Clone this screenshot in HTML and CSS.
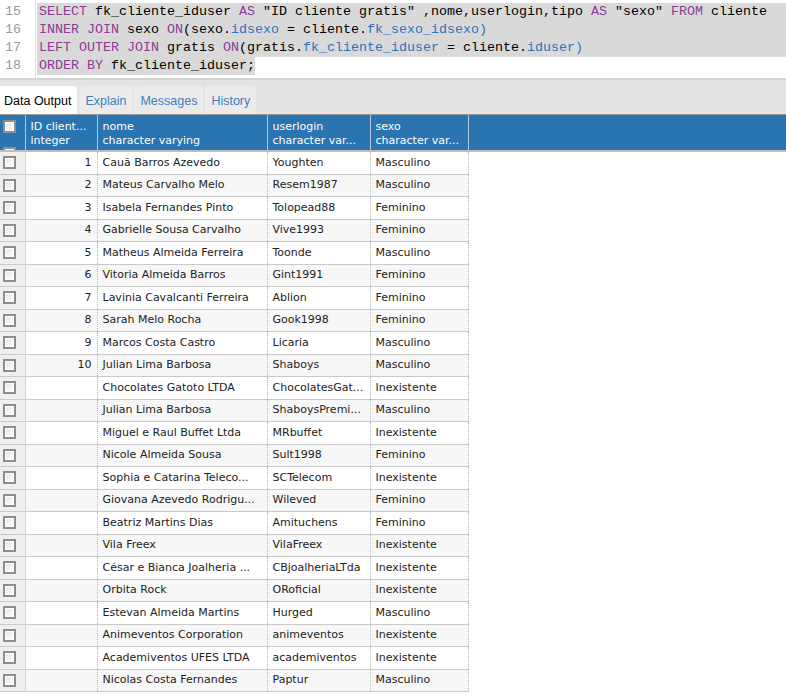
FILE: index.html
```html
<!DOCTYPE html>
<html>
<head>
<meta charset="utf-8">
<link rel="stylesheet" href="styles.css">
</head>
<body>
<div class="editor">
  <div class="gutter">
    <div class="ln">15</div>
    <div class="ln">16</div>
    <div class="ln">17</div>
    <div class="ln">18</div>
  </div>
  <div class="code">
    <div class="line full"><span class="kw">SELECT</span> fk_cliente_iduser <span class="kw">AS</span> "ID cliente gratis" ,nome,userlogin,tipo <span class="kw">AS</span> "sexo" <span class="kw">FROM</span> cliente</div>
    <div class="line full"><span class="kw">INNER JOIN</span> sexo <span class="kw">ON</span>(sexo.<span class="pr">idsexo</span> = cliente.<span class="pr">fk_sexo_idsexo</span><span class="pr">)</span></div>
    <div class="line full"><span class="kw">LEFT OUTER JOIN</span> gratis <span class="kw">ON</span>(gratis.<span class="pr">fk_cliente_iduser</span> = cliente.<span class="pr">iduser</span><span class="pr">)</span></div>
    <div class="line"><span class="sel"><span class="kw">ORDER BY</span> fk_cliente_iduser;</span></div>
  </div>
</div>
<div class="tabbar">
  <div class="tab active">Data Output</div>
  <div class="tab">Explain</div>
  <div class="tab">Messages</div>
  <div class="tab">History</div>
</div>
<table class="grid">
  <thead>
    <tr>
      <th class="chk"><span class="box"></span><span class="box cut"></span></th>
      <th class="c-id">ID client...<br>integer</th>
      <th class="c-nome">nome<br>character varying</th>
      <th class="c-login">userlogin<br>character var...</th>
      <th class="c-sexo">sexo<br>character var...</th>
      <th class="c-rest"></th>
    </tr>
  </thead>
  <tbody>
    <tr><td class="chk"><span class="box"></span></td><td class="num">1</td><td>Cauã Barros Azevedo</td><td>Youghten</td><td>Masculino</td><td class="rest"></td></tr>
    <tr><td class="chk"><span class="box"></span></td><td class="num">2</td><td>Mateus Carvalho Melo</td><td>Resem1987</td><td>Masculino</td><td class="rest"></td></tr>
    <tr><td class="chk"><span class="box"></span></td><td class="num">3</td><td>Isabela Fernandes Pinto</td><td>Tolopead88</td><td>Feminino</td><td class="rest"></td></tr>
    <tr><td class="chk"><span class="box"></span></td><td class="num">4</td><td>Gabrielle Sousa Carvalho</td><td>Vive1993</td><td>Feminino</td><td class="rest"></td></tr>
    <tr><td class="chk"><span class="box"></span></td><td class="num">5</td><td>Matheus Almeida Ferreira</td><td>Toonde</td><td>Masculino</td><td class="rest"></td></tr>
    <tr><td class="chk"><span class="box"></span></td><td class="num">6</td><td>Vitoria Almeida Barros</td><td>Gint1991</td><td>Feminino</td><td class="rest"></td></tr>
    <tr><td class="chk"><span class="box"></span></td><td class="num">7</td><td>Lavinia Cavalcanti Ferreira</td><td>Ablion</td><td>Feminino</td><td class="rest"></td></tr>
    <tr><td class="chk"><span class="box"></span></td><td class="num">8</td><td>Sarah Melo Rocha</td><td>Gook1998</td><td>Feminino</td><td class="rest"></td></tr>
    <tr><td class="chk"><span class="box"></span></td><td class="num">9</td><td>Marcos Costa Castro</td><td>Licaria</td><td>Masculino</td><td class="rest"></td></tr>
    <tr><td class="chk"><span class="box"></span></td><td class="num">10</td><td>Julian Lima Barbosa</td><td>Shaboys</td><td>Masculino</td><td class="rest"></td></tr>
    <tr><td class="chk"><span class="box"></span></td><td class="num"></td><td>Chocolates Gatoto LTDA</td><td>ChocolatesGat...</td><td>Inexistente</td><td class="rest"></td></tr>
    <tr><td class="chk"><span class="box"></span></td><td class="num"></td><td>Julian Lima Barbosa</td><td>ShaboysPremi...</td><td>Masculino</td><td class="rest"></td></tr>
    <tr><td class="chk"><span class="box"></span></td><td class="num"></td><td>Miguel e Raul Buffet Ltda</td><td>MRbuffet</td><td>Inexistente</td><td class="rest"></td></tr>
    <tr><td class="chk"><span class="box"></span></td><td class="num"></td><td>Nicole Almeida Sousa</td><td>Sult1998</td><td>Feminino</td><td class="rest"></td></tr>
    <tr><td class="chk"><span class="box"></span></td><td class="num"></td><td>Sophia e Catarina Teleco...</td><td>SCTelecom</td><td>Inexistente</td><td class="rest"></td></tr>
    <tr><td class="chk"><span class="box"></span></td><td class="num"></td><td>Giovana Azevedo Rodrigu...</td><td>Wileved</td><td>Feminino</td><td class="rest"></td></tr>
    <tr><td class="chk"><span class="box"></span></td><td class="num"></td><td>Beatriz Martins Dias</td><td>Amituchens</td><td>Feminino</td><td class="rest"></td></tr>
    <tr><td class="chk"><span class="box"></span></td><td class="num"></td><td>Vila Freex</td><td>VilaFreex</td><td>Inexistente</td><td class="rest"></td></tr>
    <tr><td class="chk"><span class="box"></span></td><td class="num"></td><td>César e Bianca Joalheria ...</td><td>CBjoalheriaLTda</td><td>Inexistente</td><td class="rest"></td></tr>
    <tr><td class="chk"><span class="box"></span></td><td class="num"></td><td>Orbita Rock</td><td>ORoficial</td><td>Inexistente</td><td class="rest"></td></tr>
    <tr><td class="chk"><span class="box"></span></td><td class="num"></td><td>Estevan Almeida Martins</td><td>Hurged</td><td>Masculino</td><td class="rest"></td></tr>
    <tr><td class="chk"><span class="box"></span></td><td class="num"></td><td>Animeventos Corporation</td><td>animeventos</td><td>Inexistente</td><td class="rest"></td></tr>
    <tr><td class="chk"><span class="box"></span></td><td class="num"></td><td>Academiventos UFES LTDA</td><td>academiventos</td><td>Inexistente</td><td class="rest"></td></tr>
    <tr><td class="chk"><span class="box"></span></td><td class="num"></td><td>Nicolas Costa Fernandes</td><td>Paptur</td><td>Masculino</td><td class="rest"></td></tr>
  </tbody>
</table>
</body>
</html>
```
FILE: styles.css
```css
html, body {
  margin: 0;
  padding: 0;
  background: #ffffff;
}
body {
  width: 786px;
  overflow: hidden;
}
.editor {
  display: flex;
  height: 80px;
  padding-top: 3px;
  box-sizing: border-box;
  border-bottom: 2px solid #d4d4d4;
  background: #fff;
}
.gutter {
  width: 35px;
  border-right: 1px solid #dddddd;
  flex: none;
  margin-top: -3px;
  padding-top: 3px;
}
.ln {
  height: 18px;
  line-height: 18px;
  padding-left: 5px;
  font-family: "Liberation Mono", monospace;
  font-size: 13.333px;
  color: #999999;
}
.code {
  flex: 1;
  padding-left: 1px;
}
.line {
  height: 18px;
  line-height: 18px;
  font-family: "Liberation Mono", monospace;
  font-size: 13.333px;
  color: #000;
  white-space: pre;
  padding-left: 2px;
}
.line.full {
  background: #d9d9d9;
}
.line .sel {
  display: inline-block;
  background: #d9d9d9;
  margin-left: -2px;
  padding-left: 2px;
  height: 18px;
}
.kw { color: #8e3a96; }
.pr { color: #2f71b8; }

.tabbar {
  display: flex;
  align-items: flex-end;
  gap: 2px;
  height: 34px;
  background: #e4e4e4;
  border-bottom: 1px solid #9a9a9a;
}
.tab {
  height: 28px;
  line-height: 30px;
  padding: 0 6px;
  background: #ebebeb;
  color: #3d7fc0;
  font-family: "Liberation Sans", Arial, sans-serif;
  font-size: 12.5px;
  border-radius: 3px 3px 0 0;
}
.tab.active {
  background: #ffffff;
  color: #000;
  padding: 0 6px 0 4px;
  border-radius: 0 3px 0 0;
}

.grid {
  border-collapse: collapse;
  table-layout: fixed;
  width: 786px;
  font-family: "DejaVu Sans", Verdana, sans-serif;
  font-size: 11px;
}
.grid th {
  background: #2b74b2;
  color: #ffffff;
  font-weight: normal;
  text-align: left;
  vertical-align: top;
  height: 36px;
  padding: 5px 0 0 5px;
  line-height: 14px;
  box-sizing: border-box;
  border-left: 1px solid #b6c9dc;
  border-bottom: 2px solid #bdbdbd;
  overflow: hidden;
  white-space: nowrap;
}
.grid th.chk {
  width: 25px;
  border-left: none;
  padding: 5px 0 0 3px;
  position: relative;
}
.grid th.c-id { width: 72px; }
.grid th.c-nome { width: 170px; }
.grid th.c-login { width: 103px; }
.grid th.c-sexo { width: 98px; }

.box {
  display: block;
  width: 13px;
  height: 13px;
  box-sizing: border-box;
  border: 2px solid #8d8d8d;
  background: linear-gradient(135deg, #e2e2e2 0%, #f4f4f4 60%, #ffffff 100%);
  box-shadow: inset 0 0 0 1px #ffffff;
}
.box.cut {
  position: absolute;
  left: 3px;
  top: 32px;
}
.grid td {
  height: 21.5px;
  padding: 0 0 0 5px;
  line-height: 20px;
  color: #222222;
  white-space: nowrap;
  overflow: hidden;
  border-bottom: 1px solid #cacaca;
  border-left: 1px dotted #b4b4b4;
}
.grid tbody tr:nth-child(even) td {
  background: #f7f7f7;
}
.grid td.chk {
  background: #efefef !important;
  padding: 0 0 0 3px;
  border-left: none;
  border-right: 1px solid #d6d6d6;
}
.grid td.num {
  text-align: right;
  padding: 0 5px 0 0;
  border-left: 1px solid #d6d6d6;
}
.grid td.rest {
  background: #ffffff !important;
  border-bottom: none;
}
```
